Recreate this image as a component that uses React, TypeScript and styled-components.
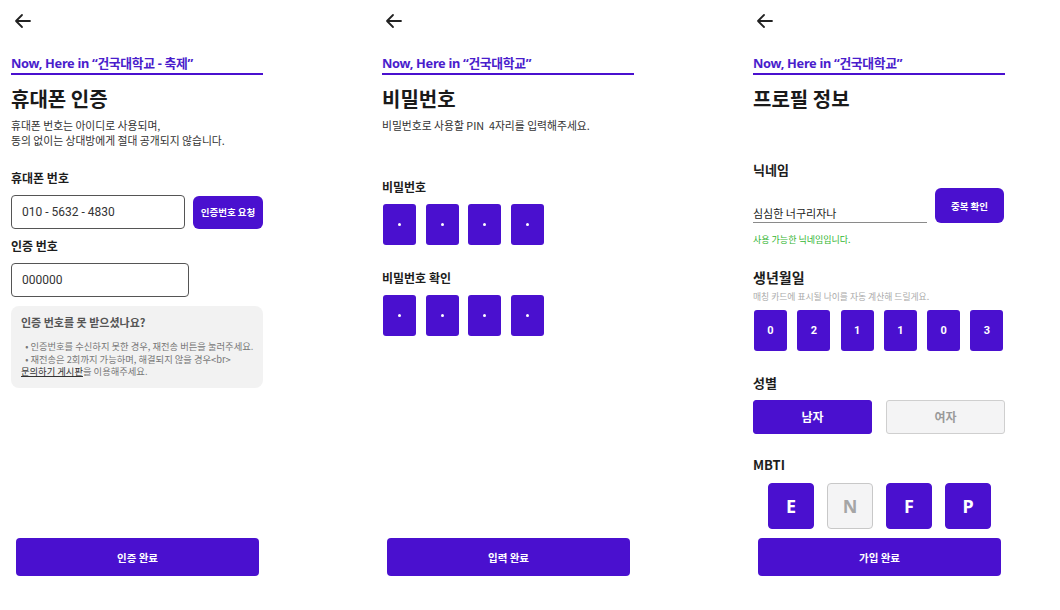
import * as React from 'react'
import styled, { createGlobalStyle } from 'styled-components'

const purple = '#4a10cf'

const GlobalStyle = createGlobalStyle`
  html, body {
    margin: 0;
    padding: 0;
    background: #fff;
  }
  body {
    font-family: "Noto Sans CJK KR", "Noto Sans", sans-serif;
    color: #1d1d1d;
  }
  * {
    box-sizing: border-box;
  }
`

const Page = styled.div`
  display: flex;
  gap: 97px;
  height: 610px;
`

const Screen = styled.section`
  width: 274px;
  height: 610px;
  display: flex;
  flex-direction: column;
  padding: 0 11px 34px;
`

const TopBar = styled.div`
  height: 36px;
  padding: 10px 0 0 3px;
  color: #222;
`

const Location = styled.div`
  margin-top: 18px;
  padding-bottom: 1px;
  border-bottom: 2px solid ${purple};
  color: #4a1dcc;
  font-family: "Noto Sans", "Noto Sans CJK KR", sans-serif;
  font-size: 12.8px;
  font-weight: 700;
  line-height: 18px;
  letter-spacing: -0.3px;
`

const Title = styled.h1`
  margin: 10px 0 0;
  font-size: 20px;
  font-weight: 700;
  line-height: 28px;
  color: #1a1a1a;
`

const Desc = styled.p`
  margin: 5px 0 0;
  font-size: 10.8px;
  line-height: 15px;
  color: #333;
`

const Label = styled.div<{ $gap: number; $size?: number }>`
  margin-top: ${(p) => p.$gap}px;
  font-size: ${(p) => p.$size ?? 12}px;
  font-weight: 700;
  line-height: 18px;
  color: #1d1d1d;
`

const FieldRow = styled.div`
  display: flex;
  align-items: center;
  gap: 8px;
  margin-top: 8px;
`

const TextInput = styled.div<{ $width: number }>`
  width: ${(p) => p.$width}px;
  height: 34px;
  padding: 0 10px;
  display: flex;
  align-items: center;
  border: 1px solid #555;
  border-radius: 4px;
  font-family: Roboto, "Noto Sans CJK KR", sans-serif;
  font-size: 12px;
  color: #333;
`

const SmallButton = styled.button<{ $width: number; $height: number }>`
  width: ${(p) => p.$width}px;
  height: ${(p) => p.$height}px;
  border: none;
  border-radius: 6px;
  background: ${purple};
  color: #fff;
  font-family: "Noto Sans CJK KR", sans-serif;
  font-size: 9.5px;
  font-weight: 700;
  padding: 0;
`

const HelpBox = styled.div`
  margin-top: 9px;
  height: 82px;
  padding: 8px 10px 0;
  border-radius: 8px;
  background: #f2f2f2;
`

const HelpTitle = styled.div`
  font-size: 11px;
  font-weight: 700;
  line-height: 16px;
  color: #555;
`

const HelpText = styled.div`
  margin-top: 10px;
  font-size: 9.3px;
  line-height: 12.5px;
  color: #777;
  white-space: pre;
`

const HelpLink = styled.span`
  color: #333;
  text-decoration: underline;
`

const Boxes = styled.div<{ $gap: number; $top: number; $center?: boolean }>`
  display: flex;
  gap: ${(p) => p.$gap}px;
  margin-top: ${(p) => p.$top}px;
  justify-content: ${(p) => (p.$center ? 'center' : 'flex-start')};
  padding-left: 1px;
`

const PinBox = styled.div`
  width: 33px;
  height: 41px;
  border-radius: 3px;
  background: ${purple};
  display: flex;
  align-items: center;
  justify-content: center;
  color: #fff;
  font-family: Roboto, sans-serif;
  font-size: 11px;
  font-weight: 700;
`

const Dot = styled.span`
  width: 3px;
  height: 3px;
  border-radius: 50%;
  background: #fff;
`

const NickRow = styled.div`
  display: flex;
  align-items: flex-end;
  gap: 8px;
  margin-top: 9px;
`

const NickInput = styled.div`
  width: 174px;
  height: 28px;
  padding-bottom: 1px;
  display: flex;
  align-items: flex-end;
  border-bottom: 1.5px solid #8a8a8a;
  font-size: 11px;
  color: #222;
`

const Notice = styled.div`
  margin-top: 10px;
  font-size: 9px;
  line-height: 13px;
  color: #33b533;
`

const SubText = styled.div`
  margin-top: 4.5px;
  font-size: 8.8px;
  line-height: 12px;
  color: #aaa;
`

const ChoiceRow = styled.div`
  display: flex;
  justify-content: space-between;
  margin-top: 8px;
`

const Choice = styled.div<{ $on: boolean }>`
  width: 119px;
  height: 34px;
  border-radius: 3px;
  display: flex;
  align-items: center;
  justify-content: center;
  font-size: 12px;
  font-weight: 700;
  background: ${(p) => (p.$on ? purple : '#f4f4f5')};
  color: ${(p) => (p.$on ? '#fff' : '#9a9a9a')};
  border: 1px solid ${(p) => (p.$on ? purple : '#cfcfcf')};
`

const MbtiBox = styled.div<{ $on: boolean }>`
  width: 46px;
  height: 46px;
  border-radius: 4px;
  display: flex;
  align-items: center;
  justify-content: center;
  font-family: "Noto Sans", sans-serif;
  font-size: 18px;
  font-weight: 700;
  background: ${(p) => (p.$on ? purple : '#f4f4f5')};
  color: ${(p) => (p.$on ? '#fff' : '#a5a5a5')};
  border: 1px solid ${(p) => (p.$on ? purple : '#c8c8c8')};
`

const SubmitButton = styled.button`
  margin: auto 4px 0 5px;
  height: 38px;
  border: none;
  border-radius: 4px;
  background: ${purple};
  color: #fff;
  font-family: "Noto Sans CJK KR", sans-serif;
  font-size: 10.5px;
  font-weight: 700;
`

const BackArrow = () => (
  <svg width="18" height="16" viewBox="0 0 18 16" fill="none" stroke="currentColor" strokeWidth="1.8" strokeLinecap="round" strokeLinejoin="round">
    <path d="M16 8H2M8 2L2 8l6 6" />
  </svg>
)

const Header = ({ place, title }: { place: string; title: string }) => (
  <>
    <TopBar>
      <BackArrow />
    </TopBar>
    <Location>Now, Here in “{place}”</Location>
    <Title>{title}</Title>
  </>
)

const PhoneScreen = () => (
  <Screen>
    <Header place="건국대학교 - 축제" title="휴대폰 인증" />
    <Desc>
      휴대폰 번호는 아이디로 사용되며,
      <br />
      동의 없이는 상대방에게 절대 공개되지 않습니다.
    </Desc>
    <Label $gap={21}>휴대폰 번호</Label>
    <FieldRow>
      <TextInput $width={174}>010 - 5632 - 4830</TextInput>
      <SmallButton $width={70} $height={33}>인증번호 요청</SmallButton>
    </FieldRow>
    <Label $gap={8}>인증 번호</Label>
    <FieldRow>
      <TextInput $width={178}>000000</TextInput>
    </FieldRow>
    <HelpBox>
      <HelpTitle>인증 번호를 못 받으셨나요?</HelpTitle>
      <HelpText>
        {'  • 인증번호를 수신하지 못한 경우, 재전송 버튼을 눌러주세요.\n'}
        {'  • 재전송은 2회까지 가능하며, 해결되지 않을 경우<br>\n'}
        <HelpLink>문의하기 게시판</HelpLink>을 이용해주세요.
      </HelpText>
    </HelpBox>
    <SubmitButton>인증 완료</SubmitButton>
  </Screen>
)

const PinRow = () => (
  <Boxes $gap={9.6} $top={8}>
    {[0, 1, 2, 3].map((i) => (
      <PinBox key={i}>
        <Dot />
      </PinBox>
    ))}
  </Boxes>
)

const PasswordScreen = () => (
  <Screen>
    <Header place="건국대학교" title="비밀번호" />
    <Desc>비밀번호로 사용할 PIN&nbsp; 4자리를 입력해주세요.</Desc>
    <Label $gap={45}>비밀번호</Label>
    <PinRow />
    <Label $gap={24}>비밀번호 확인</Label>
    <PinRow />
    <SubmitButton>입력 완료</SubmitButton>
  </Screen>
)

const birth = ['0', '2', '1', '1', '0', '3']
const mbti = [
  { letter: 'E', on: true },
  { letter: 'N', on: false },
  { letter: 'F', on: true },
  { letter: 'P', on: true },
]

const ProfileScreen = () => (
  <Screen>
    <Header place="건국대학교" title="프로필 정보" />
    <Label $gap={48} $size={13}>닉네임</Label>
    <NickRow>
      <NickInput>심심한 너구리자나</NickInput>
      <SmallButton $width={69} $height={35}>중복 확인</SmallButton>
    </NickRow>
    <Notice>사용 가능한 닉네임입니다.</Notice>
    <Label $gap={22} $size={14}>생년월일</Label>
    <SubText>매칭 카드에 표시될 나이를 자동 계산해 드릴게요.</SubText>
    <Boxes $gap={10.3} $top={7}>
      {birth.map((d, i) => (
        <PinBox key={i}>{d}</PinBox>
      ))}
    </Boxes>
    <Label $gap={23} $size={13}>성별</Label>
    <ChoiceRow>
      <Choice $on>남자</Choice>
      <Choice $on={false}>여자</Choice>
    </ChoiceRow>
    <Label $gap={22.5} $size={13}>MBTI</Label>
    <Boxes $gap={13} $top={8.5} $center>
      {mbti.map((m) => (
        <MbtiBox key={m.letter} $on={m.on}>{m.letter}</MbtiBox>
      ))}
    </Boxes>
    <SubmitButton>가입 완료</SubmitButton>
  </Screen>
)

export default function App() {
  return (
    <>
      <GlobalStyle />
      <Page>
        <PhoneScreen />
        <PasswordScreen />
        <ProfileScreen />
      </Page>
    </>
  )
}
